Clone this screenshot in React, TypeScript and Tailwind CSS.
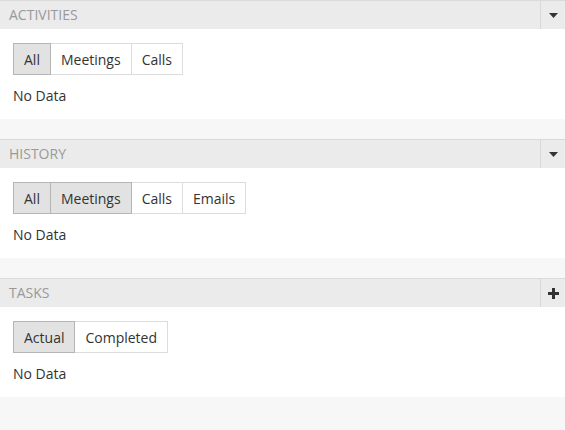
import { type ReactNode } from 'react';

type Section = {
  title: string;
  action: 'caret' | 'plus';
  tabs: { label: string; active: boolean }[];
};

const sections: Section[] = [
  {
    title: 'Activities',
    action: 'caret',
    tabs: [
      { label: 'All', active: true },
      { label: 'Meetings', active: false },
      { label: 'Calls', active: false },
    ],
  },
  {
    title: 'History',
    action: 'caret',
    tabs: [
      { label: 'All', active: true },
      { label: 'Meetings', active: true },
      { label: 'Calls', active: false },
      { label: 'Emails', active: false },
    ],
  },
  {
    title: 'Tasks',
    action: 'plus',
    tabs: [
      { label: 'Actual', active: true },
      { label: 'Completed', active: false },
    ],
  },
];

function ActionIcon({ kind }: { kind: Section['action'] }): ReactNode {
  if (kind === 'plus') {
    return (
      <svg width="11" height="11" viewBox="0 0 11 11" aria-hidden="true">
        <path d="M4 0h3v4h4v3H7v4H4V7H0V4h4z" fill="#333" />
      </svg>
    );
  }
  return (
    <svg width="9" height="5" viewBox="0 0 9 5" aria-hidden="true">
      <path d="M0 0h9L4.5 5z" fill="#333" />
    </svg>
  );
}

export default function App() {
  return (
    <div className="min-h-[430px] bg-[#f7f7f7] font-['Open_Sans',sans-serif] text-[#333]">
      {sections.map((section) => (
        <section key={section.title} className="mb-[20px]">
          <div className="flex h-[29px] border-t border-[#dadada] bg-[#ebebeb]">
            <h2 className="flex-1 pl-[9px] text-[14px] leading-[28px] uppercase text-[#999]">{section.title}</h2>
            <button className="flex w-[25px] items-center justify-center border-l border-[#d8d8d8]">
              <ActionIcon kind={section.action} />
            </button>
          </div>
          <div className="h-[90px] bg-white px-[13px] pt-[14px]">
            <div className="flex">
              {section.tabs.map((tab, i) => (
                <button
                  key={tab.label}
                  className={`h-[32px] border px-[10px] text-[14px] ${i > 0 ? '-ml-px' : ''} ${
                    tab.active ? 'relative z-10 border-[#b5b5b5] bg-[#e2e2e2]' : 'border-[#dcdcdc] bg-white'
                  }`}
                >
                  {tab.label}
                </button>
              ))}
            </div>
            <p className="mt-[11px] text-[14px] leading-[20px]">No Data</p>
          </div>
        </section>
      ))}
    </div>
  );
}
